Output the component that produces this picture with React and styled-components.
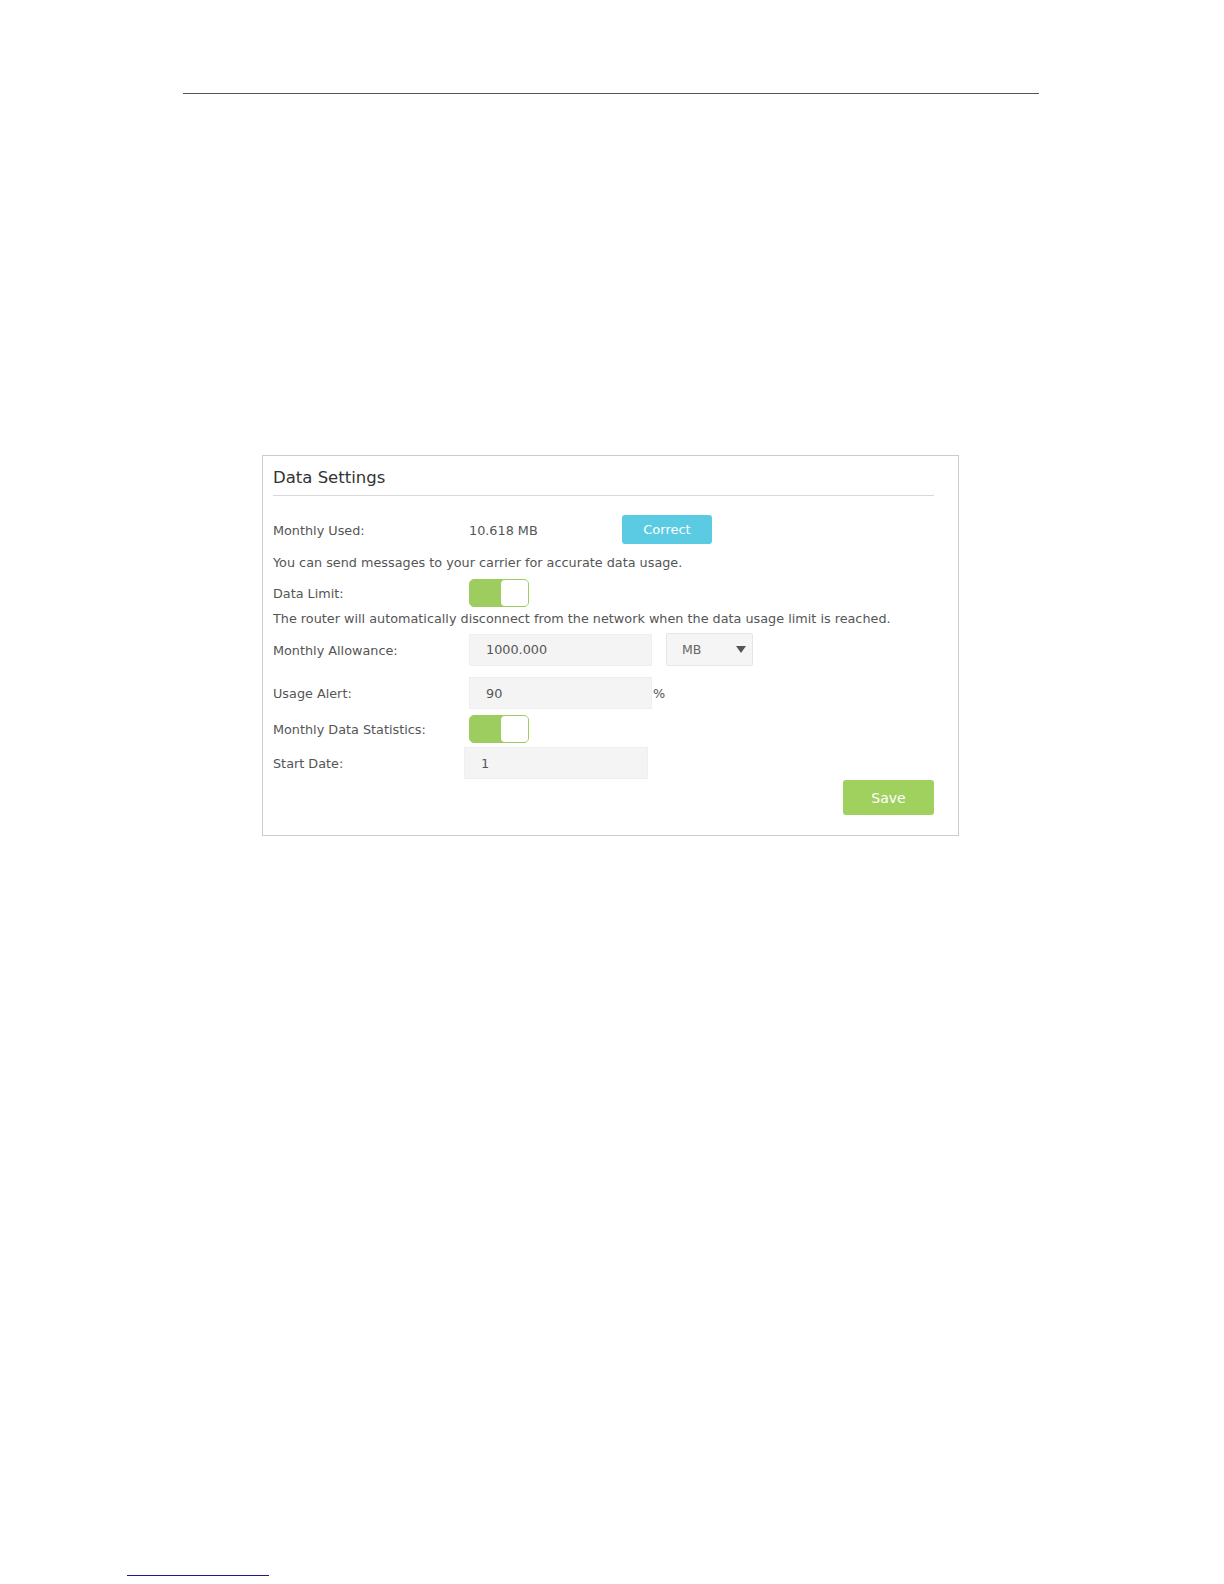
import React from "react";
import styled, { createGlobalStyle } from "styled-components";

const Global = createGlobalStyle`
  html, body { margin: 0; padding: 0; background: #ffffff; }
  * { box-sizing: border-box; }
`;

const Page = styled.div`
  display: flex;
  flex-direction: column;
  align-items: flex-start;
  min-height: 1584px;
  font-family: "DejaVu Sans", Verdana, sans-serif;
`;

const HeaderRule = styled.div`
  margin: 93px 0 0 183px;
  width: 856px;
  height: 1px;
  background: #555555;
`;

const Panel = styled.section`
  margin: 361px 0 0 262px;
  width: 697px;
  border: 1px solid #cccccc;
  padding: 0 24px 20px 10px;
  display: flex;
  flex-direction: column;
`;

const Title = styled.h2`
  margin: 10px 0 0 0;
  font-size: 16.5px;
  line-height: 24px;
  font-weight: normal;
  color: #333333;
  padding-bottom: 5px;
  border-bottom: 1px solid #d9d9d9;
`;

const Row = styled.div`
  display: flex;
  align-items: center;
  height: ${(p) => p.$h}px;
  margin-top: ${(p) => p.$mt}px;
`;

const Label = styled.span`
  flex: 0 0 ${(p) => p.$w || 196}px;
  font-size: 12.8px;
  color: #555555;
  padding-top: 1px;
`;

const Value = styled.span`
  flex: 0 0 153px;
  font-size: 12.8px;
  color: #555555;
  padding-top: 1px;
`;

const Note = styled.p`
  margin: ${(p) => p.$mt}px 0 0 0;
  font-size: 12.8px;
  line-height: 18px;
  color: #555555;
`;

const Button = styled.button`
  border: none;
  border-radius: 3px;
  width: ${(p) => p.$w}px;
  height: ${(p) => p.$h}px;
  background: ${(p) => p.$bg};
  color: #ffffff;
  font-family: "DejaVu Sans", Verdana, sans-serif;
  font-size: ${(p) => p.$fs}px;
  padding: 0;
`;

const Toggle = styled.div`
  display: flex;
  justify-content: flex-end;
  width: 60px;
  height: 28px;
  border: 1px solid #9ccd5e;
  border-radius: 5px;
  background: #9ccd5e;
`;

const Knob = styled.div`
  width: 27px;
  height: 100%;
  border-radius: 4px;
  background: #ffffff;
`;

const Field = styled.div`
  display: flex;
  align-items: center;
  width: ${(p) => p.$w || 183}px;
  height: 32px;
  padding-left: 16px;
  background: #f4f4f4;
  border: 1px solid #efefef;
  font-size: 12.8px;
  color: #555555;
`;

const Select = styled.div`
  display: flex;
  align-items: center;
  justify-content: space-between;
  margin-left: 14px;
  width: 87px;
  height: 33px;
  padding: 0 6px 0 15px;
  background: #f5f5f5;
  border: 1px solid #e6e6e6;
  border-radius: 2px;
  font-size: 12.5px;
  color: #666666;
`;

const Caret = styled.svg`
  width: 10px;
  height: 7px;
`;

const Unit = styled.span`
  margin-left: 1px;
  font-size: 12.8px;
  color: #555555;
`;

const Actions = styled.div`
  display: flex;
  justify-content: flex-end;
  margin-top: 1px;
`;

const FooterRule = styled.div`
  margin: auto 0 8px 127px;
  width: 142px;
  height: 1px;
  background: #1c1c8c;
`;

const Switch = () => (
  <Toggle>
    <Knob />
  </Toggle>
);

export default function App() {
  return (
    <>
      <Global />
      <Page>
        <HeaderRule />
        <Panel>
          <Title>Data Settings</Title>
          <Row $h={29} $mt={19}>
            <Label>Monthly Used:</Label>
            <Value>10.618 MB</Value>
            <Button $w={90} $h={29} $bg="#5bcbe4" $fs={13}>
              Correct
            </Button>
          </Row>
          <Note $mt={10}>You can send messages to your carrier for accurate data usage.</Note>
          <Row $h={28} $mt={7}>
            <Label>Data Limit:</Label>
            <Switch />
          </Row>
          <Note $mt={3}>
            The router will automatically disconnect from the network when the data usage limit is reached.
          </Note>
          <Row $h={33} $mt={5}>
            <Label>Monthly Allowance:</Label>
            <Field>1000.000</Field>
            <Select>
              <span>MB</span>
              <Caret viewBox="0 0 10 7">
                <path d="M0 0 L10 0 L5 7 Z" fill="#555555" />
              </Caret>
            </Select>
          </Row>
          <Row $h={32} $mt={11}>
            <Label>Usage Alert:</Label>
            <Field>90</Field>
            <Unit>%</Unit>
          </Row>
          <Row $h={28} $mt={6}>
            <Label>Monthly Data Statistics:</Label>
            <Switch />
          </Row>
          <Row $h={32} $mt={4}>
            <Label $w={191}>Start Date:</Label>
            <Field $w={184}>1</Field>
          </Row>
          <Actions>
            <Button $w={91} $h={35} $bg="#a0d15f" $fs={14}>
              Save
            </Button>
          </Actions>
        </Panel>
        <FooterRule />
      </Page>
    </>
  );
}
